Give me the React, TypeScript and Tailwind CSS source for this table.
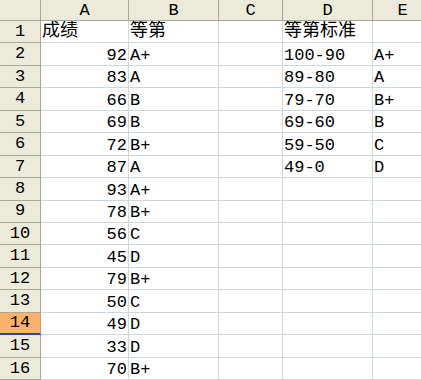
import React from 'react';

type Row = { a?: string; b?: string; d?: string; e?: string };

const rows: Row[] = [
    { a: '成绩', b: '等第', d: '等第标准' },
    { a: '92', b: 'A+', d: '100-90', e: 'A+' },
    { a: '83', b: 'A', d: '89-80', e: 'A' },
    { a: '66', b: 'B', d: '79-70', e: 'B+' },
    { a: '69', b: 'B', d: '69-60', e: 'B' },
    { a: '72', b: 'B+', d: '59-50', e: 'C' },
    { a: '87', b: 'A', d: '49-0', e: 'D' },
    { a: '93', b: 'A+' },
    { a: '78', b: 'B+' },
    { a: '56', b: 'C' },
    { a: '45', b: 'D' },
    { a: '79', b: 'B+' },
    { a: '50', b: 'C' },
    { a: '49', b: 'D' },
    { a: '33', b: 'D' },
    { a: '70', b: 'B+' },
];

const font = { fontFamily: '"Liberation Mono", "Noto Sans CJK SC", monospace' };
const isCjk = (s?: string) => !!s && /[\u4e00-\u9fff]/.test(s);

const Cell = ({ value, width, right }: { value?: string; width: string; right?: boolean }) => (
    <div
        className={`${width} shrink-0 h-full flex items-end overflow-hidden whitespace-nowrap border-r border-b border-[#cdd6d9] ${right && !isCjk(value) ? 'justify-end pr-[1px]' : 'justify-start pl-[1px]'} ${isCjk(value) ? 'text-[18px] leading-[22px]' : 'text-[17px] leading-[19px]'}`}
    >
        {value}
    </div>
);

export default function App() {
    return (
        <div className="w-[421px] h-[380px] overflow-hidden bg-white text-black" style={font}>
            <div className="flex h-[21px] bg-[#ebeadb] border-b border-[#a9a896]">
                <div className="w-[41px] shrink-0 border-r border-[#a9a896]" />
                {[
                    ['A', 'w-[88px]'],
                    ['B', 'w-[90px]'],
                    ['C', 'w-[64px]'],
                    ['D', 'w-[90px]'],
                    ['E', 'w-[60px]'],
                ].map(([l, w]) => (
                    <div key={l} className={`${w} shrink-0 flex items-center justify-center text-[17px] leading-none border-r border-[#a9a896]`}>
                        {l}
                    </div>
                ))}
            </div>
            {rows.map((r, i) => {
                const sel = i === 13;
                return (
                    <div key={i} className="flex h-[22.45px]">
                        <div
                            className={`w-[41px] shrink-0 flex items-center justify-center text-[17px] border-r ${sel ? 'bg-[#f8b36c] border-b-2 border-b-[#2f3fa0] border-r-[#a9a896]' : 'bg-[#ebeadb] border-b border-[#a9a896]'}`}
                        >
                            {i + 1}
                        </div>
                        <Cell value={r.a} width="w-[88px]" right />
                        <Cell value={r.b} width="w-[90px]" />
                        <Cell width="w-[64px]" />
                        <Cell value={r.d} width="w-[90px]" />
                        <Cell value={r.e} width="w-[60px]" />
                    </div>
                );
            })}
        </div>
    );
}
